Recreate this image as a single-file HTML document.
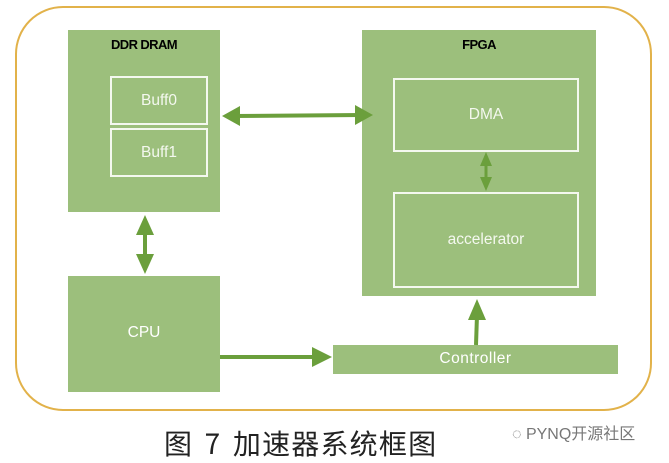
<!DOCTYPE html>
<html><head><meta charset="utf-8"><style>
body{margin:0;width:669px;height:458px;background:#fff;position:relative;overflow:hidden;font-family:"Liberation Sans","Noto Sans CJK SC",sans-serif}
.b{position:absolute;background:#9cbf7c}
.w{position:absolute;border:2px solid #f4f8ef;box-sizing:border-box;color:#f4f8ef;font-size:15.5px;display:flex;align-items:center;justify-content:center}
.t{position:absolute;color:#fff;font-size:15.5px;text-align:center}
</style></head><body>
<div style="position:absolute;left:15px;top:6px;width:637px;height:405px;border:2px solid #e2b24a;border-radius:48px;box-sizing:border-box"></div>
<div class="b" style="left:68px;top:30px;width:152px;height:182px"></div>
<div style="position:absolute;left:68px;top:37px;width:152px;text-align:center;font-size:13px;font-weight:bold;letter-spacing:-0.6px">DDR DRAM</div>
<div class="w" style="left:110px;top:76px;width:98px;height:49px">Buff0</div>
<div class="w" style="left:110px;top:128px;width:98px;height:49px">Buff1</div>
<div class="b" style="left:362px;top:30px;width:234px;height:266px"></div>
<div style="position:absolute;left:362px;top:37px;width:234px;text-align:center;font-size:13px;font-weight:bold;letter-spacing:-0.6px">FPGA</div>
<div class="w" style="left:393px;top:78px;width:186px;height:74px">DMA</div>
<div class="w" style="left:393px;top:192px;width:186px;height:96px">accelerator</div>
<div class="b" style="left:68px;top:276px;width:152px;height:116px"></div>
<div class="t" style="left:68px;top:324px;width:152px">CPU</div>
<div class="b" style="left:333px;top:345px;width:285px;height:29px"></div>
<div class="t" style="left:333px;top:350px;width:285px;letter-spacing:0.5px">Controller</div>
<svg width="669" height="458" style="position:absolute;left:0;top:0" fill="#6b9f3c" stroke="#6b9f3c">
<line x1="232" y1="116" x2="362" y2="115" stroke-width="4"/>
<polygon points="222,116 240,106 240,126" stroke="none"/>
<polygon points="373,115 355,105 355,125" stroke="none"/>
<line x1="145" y1="228" x2="145" y2="262" stroke-width="4"/>
<polygon points="145,215 136,235 154,235" stroke="none"/>
<polygon points="145,274 136,254 154,254" stroke="none"/>
<line x1="486" y1="160" x2="486" y2="184" stroke-width="3"/>
<polygon points="486,152 480,166 492,166" stroke="none"/>
<polygon points="486,191 480,177 492,177" stroke="none"/>
<line x1="220" y1="357" x2="315" y2="357" stroke-width="4"/>
<polygon points="332,357 312,347 312,367" stroke="none"/>
<line x1="476" y1="345" x2="477" y2="315" stroke-width="4"/>
<polygon points="477,299 468,320 486,320" stroke="none"/>
</svg>
<div style="position:absolute;left:164px;top:423px;font-size:28px;color:#222;letter-spacing:1.2px;word-spacing:4px;font-family:'Noto Sans CJK SC',sans-serif">图 7 加速器系统框图</div>
<div style="position:absolute;left:512px;top:420px;font-size:16px;color:#777">◌ PYNQ开源社区</div>
</body></html>
